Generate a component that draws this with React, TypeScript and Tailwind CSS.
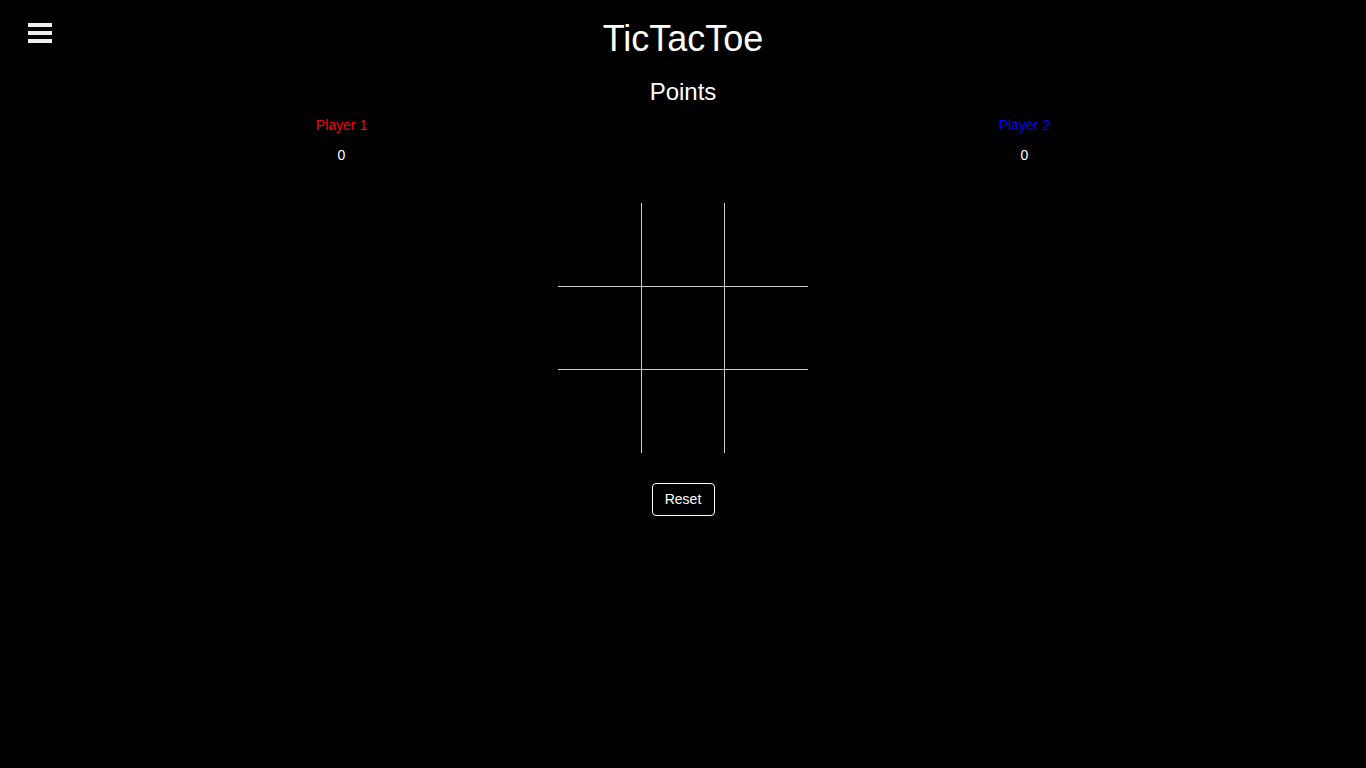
const cells = Array.from({ length: 9 }, (_, i) => i)

function Cell({ index }: { index: number }) {
  const col = index % 3
  const row = Math.floor(index / 3)
  const cls = [
    'bg-black',
    col === 1 ? 'w-[84px] border-x border-[#cccccc]' : 'w-[83px]',
    row === 1 ? 'h-[84px] border-y border-[#cccccc]' : 'h-[83px]',
  ].join(' ')
  return <div className={cls} />
}

export default function App() {
  return (
    <div
      className="relative min-h-screen w-full bg-black text-white"
      style={{ fontFamily: '"Liberation Sans", Arial, sans-serif' }}
    >
      {/* Menu toggle */}
      <button className="absolute left-[28px] top-[23px] flex flex-col gap-[4px]" aria-label="Menu">
        <span className="block h-[4px] w-[24px] bg-[#eeeeee]" />
        <span className="block h-[4px] w-[24px] bg-[#eeeeee]" />
        <span className="block h-[4px] w-[24px] bg-[#eeeeee]" />
      </button>

      <h1 className="pt-[19px] text-center text-[36px] leading-[40px] font-normal">TicTacToe</h1>
      <h2 className="mt-[19px] text-center text-[24px] leading-[28px] font-normal">Points</h2>

      <div className="mt-[11px] flex text-[14px]">
        <div className="flex flex-1 flex-col items-center">
          <span className="leading-[16px] text-[#ff0000]">Player 1</span>
          <span className="mt-[14px] leading-[16px]">0</span>
        </div>
        <div className="flex flex-1 flex-col items-center">
          <span className="leading-[16px] text-[#0000ff]">Player 2</span>
          <span className="mt-[14px] leading-[16px]">0</span>
        </div>
      </div>

      {/* Board */}
      <div className="mx-auto mt-[40px] grid w-[250px] grid-cols-[83px_84px_83px]">
        {cells.map((i) => (
          <Cell key={i} index={i} />
        ))}
      </div>

      <div className="mt-[30px] flex justify-center">
        <button className="flex h-[33px] w-[63px] items-center justify-center rounded-[4px] border border-white text-[14px] text-white">
          Reset
        </button>
      </div>
    </div>
  )
}
